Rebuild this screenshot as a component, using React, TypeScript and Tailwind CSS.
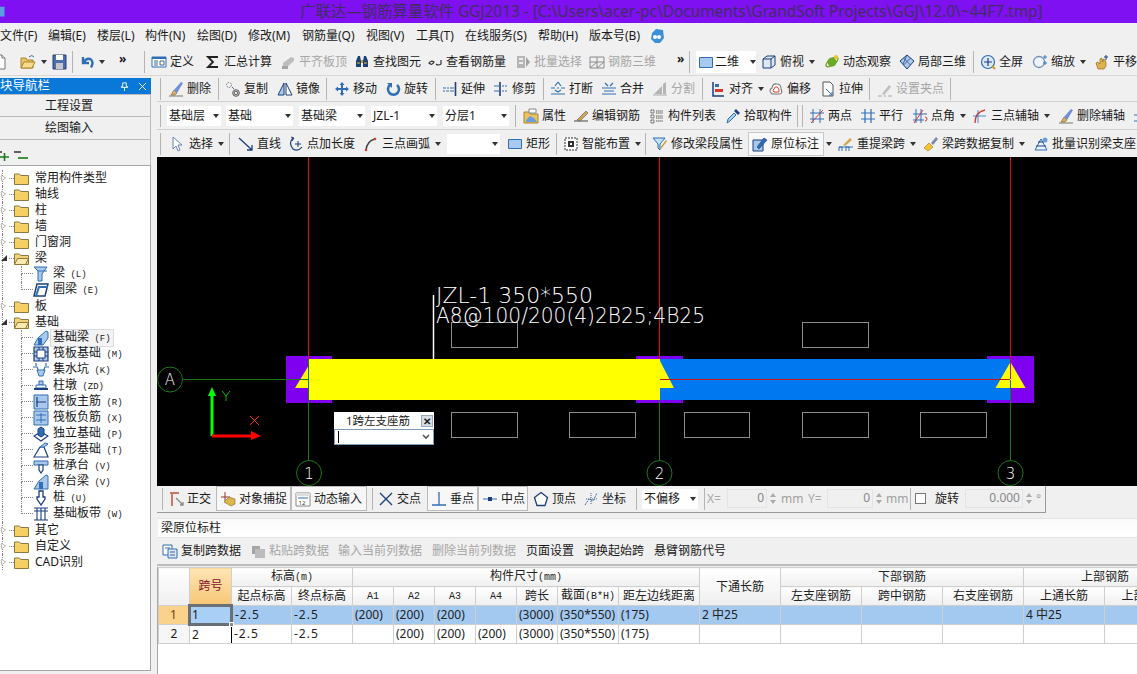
import React from 'react';

const B = '#2f6fb5', D = '#1d3f7a', L = '#a9c8ec', Y = '#f2c230', G = '#8a8a8a', R = '#d9382c';

const icons: Record<string, React.ReactNode> = {
  new: <><path d="M3 1h7l3 3v11H3z" fill="#fff" stroke="#777" /><path d="M10 1v3h3" fill="#eee" stroke="#777" /></>,
  open: <><path d="M1 4h5l1 2h6v8H1z" fill="#e8c468" stroke="#a8842c" /><path d="M1 14l3-6h11l-3 6z" fill="#f7dc8c" stroke="#a8842c" /><path d="M9 3q3-3 5 0" fill="none" stroke={B} /></>,
  save: <><path d="M1 1h13v14H1z" fill="#4a6fb0" stroke="#2a3f70" /><path d="M4 1h7v5H4z" fill="#fff" /><path d="M4 9h7v6H4z" fill="#c7c7c7" /></>,
  undo: <path d="M3 3v6h6M3.5 8.5Q7 3 11 5.5q3 3 0 8" fill="none" stroke={B} strokeWidth="2.4" />,
  def: <><path d="M1 3h14v10H1z" fill="#fff" stroke={B} /><path d="M1 3h14v2H1z" fill={B} /><path d="M3 7h4M3 9h4M3 11h4M9 7h4v4H9z" fill="none" stroke={D} strokeWidth=".8" /></>,
  sum: <path d="M13 3H3l5 5-5 5h10" fill="none" stroke="#222" strokeWidth="1.8" />,
  flat: <><path d="M3 9l8-6 3 1v3l-7 6H3z" fill="#bdbdbd" /><path d="M2 12h6v3H2z" fill="#a5a5a5" /></>,
  bino: <><path d="M2 7l2-5h2l1 5v6H2zM9 7l1-5h2l2 5v6H9z" fill="#1d3f7a" /><path d="M7 6h2v3H7z" fill="#c79a2a" /><path d="M3 9h3M10 9h3" stroke={Y} /></>,
  look: <><path d="M2 9q2-3 5-1-2 4-5 1zM14 6v4q-3 2-5 0" fill="none" stroke="#333" strokeWidth="1.2" /></>,
  batch: <><path d="M2 2h8v12H2z" fill="#b5b5b5" /><path d="M4 4h4v2H4zM4 8h4v2H4z" fill="#eee" /><path d="M11 3l4 5-4 5z" fill="#a0a0a0" /></>,
  steel3: <><path d="M1 3h14v11H1z" fill="none" stroke="#8a8a8a" /><path d="M1 8h14M8 3v11M1 14l7-6M8 14l7-6" stroke="#8a8a8a" /></>,
  two: <path d="M1.5 3.5h13v10h-13z" fill="#a8caf0" stroke={B} />,
  top: <><path d="M2 5l4-3h8v9l-4 3H2z" fill="#dbe8f6" stroke={D} /><path d="M2 5h8v9M10 5l4-3" fill="none" stroke={D} /></>,
  orbit: <><ellipse cx="8" cy="8" rx="7" ry="3" transform="rotate(-35 8 8)" fill="none" stroke="#7da52c" strokeWidth="1.4" /><circle cx="8" cy="8" r="4.5" fill="#6aa827" /><circle cx="12" cy="3" r="2" fill={Y} /></>,
  part: <><path d="M1 7l7-6 7 6-7 8z" fill={L} stroke={D} /><path d="M4.5 4l7 7M8 1l-4 9M11.5 4l-7 7" stroke={D} strokeWidth=".7" /></>,
  full: <><circle cx="8" cy="8" r="6.5" fill="#dbe8f6" stroke={B} strokeWidth="1.2" /><path d="M8 4v8M4 8h8" stroke={D} strokeWidth="1.2" /><path d="M12 12l3 3" stroke="#c79a2a" strokeWidth="2" /></>,
  zoom: <><circle cx="7" cy="8" r="5.5" fill="#eef4fb" stroke="#6f8fb5" strokeWidth="1.3" /><path d="M13 1v4M11 3h4M13 7v4M11 9h4" stroke="#3a7fbf" /></>,
  pan: <><path d="M4 15L2 9l2-1 2 2V5l1.5-1L9 8V5l2 1 1 3v3l-2 3z" fill="#e0b24c" stroke="#8a6a24" strokeWidth=".7" /><path d="M12 1v5M10 3h4" stroke={D} /></>,
  del: <><path d="M1 15h14" stroke="#777" /><path d="M3 14l3-5 3 3-2 2z" fill="#d8b060" stroke="#7d5a1f" strokeWidth=".6" /><path d="M6 9l7-8 2 1-6 10z" fill="#6f8fd8" /></>,
  copy: <><circle cx="4" cy="4" r="2.5" fill="none" stroke="#777" strokeDasharray="1.5 1" /><circle cx="11" cy="12" r="3.3" fill="none" stroke="#555" /><circle cx="11" cy="12" r="1.8" fill="none" stroke="#555" /><path d="M7 6l2 2" stroke={B} /></>,
  mirror: <><path d="M7 2L1 14h6z" fill={L} stroke={D} /><path d="M9 2l6 12H9z" fill="#fff" stroke={D} /></>,
  move: <path d="M8 1l2.500 3H9v3h3V5.500L15 8l-3 2.500V9H9v3h1.500L8 15l-2.500-3H7V9H4v1.500L1 8l3-2.500V7h3V4H5.500z" fill={B} />,
  rot: <><path d="M12 4a5.500 5.500 0 1 1-7 0" fill="none" stroke={B} strokeWidth="2.600" /><path d="M2 2h5v5z" fill={B} /></>,
  extend: <><path d="M13.500 1v14" stroke={D} strokeWidth="1.600" /><path d="M1 7h3M5 7h2M8 7h4M1 10h2M4 10h3M8 10h4" stroke={B} /></>,
  trim: <><path d="M7 1v14" stroke={D} strokeWidth="1.600" /><path d="M1 5h5M1 10h5M9 5h2M12 5h2M9 10h2M12 10h2" stroke={B} /></>,
  brk: <path d="M1 7h4M7 7h2M11 7h4M1 13h14M8 1l-3 4M8 1l3 4M8 11l-3-2M8 11l3-2" stroke={B} strokeWidth="1.200" fill="none" />,
  merge: <path d="M1 7h14M1 13h14M4 2l3 3M12 2L9 5M3 10h10" stroke={B} strokeWidth="1.200" fill="none" />,
  split: <><path d="M1 14h14" stroke="#aaa" /><path d="M2 13l8-8v8zM11 13V3l3-2v12z" fill="#b3b3b3" /></>,
  align: <><path d="M3 1v14h11" fill="none" stroke={D} strokeWidth="1.500" /><path d="M5 3h4v3H5z" fill={B} /><path d="M5 8h8v3H5z" fill={R} /></>,
  offset: <><path d="M4 13q-4-4 0-6 1-5 5-4 4 0 4 5 2 4-1 5z" fill="#fff" stroke="#777" strokeWidth="1.100" /><path d="M6 11q-2-2 0-3 1-3 3-2t2 3 0 2z" fill="none" stroke={R} /></>,
  stretch: <><path d="M3 1h7l3 3v11H3z" fill="#fff" stroke="#555" /><path d="M6 8l6 6M9 14h3v-3" fill="none" stroke={B} /></>,
  grip: <><path d="M1 15h4M7 15h2M11 15h4" stroke="#aaa" /><path d="M5 13l7-9 2 2-7 8z" fill="#bdbdbd" /></>,
  prop: <><path d="M1 4h5l1 2h8v9H1z" fill="#edc266" stroke="#a8842c" /><path d="M3 12l4-4 4 2 3 4H3z" fill="#6aa0d8" /><path d="M6 1h7v4H6z" fill="#fff" stroke="#888" /></>,
  edit: <><path d="M1 13h14" stroke="#444" /><path d="M4 12L13 3l2 2-8 8z" fill="#d0a850" stroke="#555" strokeWidth=".6" /></>,
  list: <path d="M2 2h3v3H2zM2 7h3v3H2zM2 12h3v3H2zM7 3h7M7 5h7M7 8h7M7 10h7M7 13h7" fill="none" stroke="#555" strokeDasharray="1.500 .6" />,
  pick: <><path d="M2 15l1-4 6-6 2 2-6 6z" fill="#a8d0f0" stroke={B} /><path d="M9 3l2-2 4 4-2 2z" fill={D} /></>,
  pt2: <><path d="M1 5h14M1 11h14M4 1v14M11 1v14" stroke={B} /><path d="M2 15L14 2" stroke={R} /></>,
  para: <path d="M1 5h14M1 11h14M5 1v14M11 1v14" stroke={B} strokeWidth="1.200" />,
  angle: <><path d="M1 6h14M1 12h11M4 1v14M9 1v14" stroke={B} /><path d="M2 15L11 2" stroke={R} /><path d="M13 9a2 2 0 1 1 0 4" fill="none" stroke={R} /></>,
  arc3: <><path d="M3 15Q3 4 13 2" fill="none" stroke={R} strokeWidth="1.300" /><path d="M1 8h13M6 2v13" stroke={B} strokeWidth=".8" /></>,
  sel: <path d="M3 1v12l3-3 2 5 2-1-2-5h4z" fill="#fff" stroke="#6b84b8" />,
  line: <path d="M1 2l13 12M14 9v5H9" fill="none" stroke={D} strokeWidth="1.300" />,
  len: <><path d="M5 2q-5 5 0 11 5 3 9-2" fill="none" stroke={D} strokeWidth="1.200" /><path d="M3 1l3 1-2 3M7 8h6M10 5v6" fill="none" stroke={D} /></>,
  arc: <><path d="M3 14Q4 5 12 3" fill="none" stroke="#444" strokeWidth="1.500" /><circle cx="3" cy="14" r="1.300" fill={R} /><circle cx="12" cy="3" r="1.300" fill={R} /></>,
  rect: <path d="M1.500 3.500h13v9h-13z" fill="#a8caf0" stroke={B} />,
  smart: <><path d="M2 2h12v12H2z" fill="#fff" stroke="#333" strokeDasharray="2 1" /><path d="M5 5h6v6H5z" fill="#333" /><path d="M7 7h2v2H7z" fill="#fff" /></>,
  attr: <><path d="M1 2h12L8 8v6l-2-2V8z" fill="#bfe2f5" stroke={B} /><path d="M8 12l6-8 1 1-6 8z" fill="#c79a2a" /></>,
  mark: <><path d="M1 4h10v11H1z" fill={L} stroke={D} /><path d="M5 11l7-9 3 2-8 9z" fill={B} stroke={D} strokeWidth=".6" /></>,
  respan: <><path d="M1 15v-4h3v4M8 15v-4h3v4M1 11h14" fill="none" stroke={B} /><path d="M5 9l7-7 2 2-7 6z" fill="#d0a850" /></>,
  brush: <><path d="M1 12l5-5 4 4-5 4z" fill={Y} stroke="#9a7a1a" strokeWidth=".6" /><path d="M8 7l5-6 2 2-5 6z" fill="#7a8aa8" /></>,
  batchid: <><path d="M2 14L8 3l6 11z" fill="#eaf3fb" stroke={B} /><path d="M5 6h6M3 10h10" stroke={D} /><circle cx="12" cy="4" r="2.500" fill="#6aa0d8" /></>,
  ortho: <><path d="M2 2h9M4 2v13" stroke="#c87868" strokeWidth="2" /><path d="M8 7l7 7M12 14h3v-3" fill="none" stroke="#888" strokeWidth="1.300" /></>,
  snap: <><path d="M1 6h9M5 1v9" stroke="#933" /><path d="M4 11l5-5 6 2v5l-4 2z" fill="#dcb64c" stroke="#8a6a24" strokeWidth=".6" /></>,
  dyn: <><path d="M1 2h14v13H1z" fill="#fff" stroke="#888" /><path d="M1 2h14v3H1z" fill="#ddd" /><path d="M3 7h10" stroke={B} /><text x="3.500" y="14" fontSize="6" fill="#333">12</text></>,
  cross: <path d="M2 2l12 12M14 2L2 14" stroke={D} strokeWidth="1.400" />,
  perp: <path d="M1 14h14M8 1v13" stroke={B} strokeWidth="1.300" />,
  mid: <><path d="M1 8h14" stroke={B} /><path d="M6 6h4v4H6z" fill={D} /></>,
  vertex: <><path d="M8 1.500l6.500 5-2.500 8H4l-2.500-8z" fill="#fff" stroke={D} strokeWidth="1.300" /></>,
  coord: <><path d="M2 14l4-6 4 2 4-8" fill="none" stroke={B} strokeDasharray="2 1" /><path d="M8 2v12M3 8h11" stroke={D} strokeWidth=".8" strokeDasharray="1 1" /></>,
  paste: <><path d="M2 3h8v8H2z" fill="#a5a5a5" /><path d="M5 6h10v9H5z" fill="#bcbcbc" /></>,
  copydata: <><path d="M1 2h9v10H1z" fill="#fff" stroke={B} /><path d="M6 6h9v9H6z" fill="#dbe8f6" stroke={B} /><path d="M3 5h5M8 9h5M8 12h5" stroke={D} strokeWidth=".8" /></>,
  beam: <><path d="M1 1h13L9 8v7H5V5z" fill={L} stroke={B} /><path d="M5 5h9" stroke={B} /></>,
  ring: <><path d="M4 2h11l-3 12H1z" fill="#fff" stroke={D} strokeWidth="1.500" /><path d="M3 14l3-9h9" fill="none" stroke={B} strokeWidth="2" /></>,
  fbeam: <><path d="M5 8l8-7 2 1v6l-5 7H1z" fill={L} stroke={B} /><path d="M5 15V8h4v7z" fill={B} /></>,
  raft: <><path d="M1 1h14v14H1z" fill={L} stroke={D} strokeWidth="1.200" /><path d="M4 4h8v8H4zM1 6h3M1 10h3M12 6h3M12 10h3M6 1v3M10 1v3M6 12v3M10 12v3" fill="#fff" stroke={D} /></>,
  pit: <><path d="M0 5h4l2 5h4l2-5h4M3 1v3M13 1v3" fill="none" stroke={B} strokeWidth="1.200" /><path d="M4 8h8l-2 6H6z" fill={L} stroke={B} /></>,
  pier: <><path d="M6 3h4v4H6z" fill={L} stroke={B} /><path d="M3 7h10v3H3z" fill="#fff" stroke={B} /><path d="M1 11h14" stroke={D} strokeWidth="2" /></>,
  rmain: <><path d="M1 1h14v14H1z" fill={L} stroke={B} /><path d="M4 3v10M3 8h10" stroke={D} strokeWidth="1.200" /></>,
  rneg: <><path d="M1 1h14v14H1z" fill={L} stroke={B} /><path d="M3 5h10M3 10h10M8 3v10" stroke={B} /></>,
  iso: <><path d="M1 10l7-4 7 4-7 5z" fill="#fff" stroke={D} strokeWidth="1.200" /><path d="M5 3l3-2 3 2v6l-3 2-3-2z" fill={B} stroke={D} /></>,
  strip: <><path d="M1 15l6-10h4l4 10z" fill="#fff" stroke={D} strokeWidth="1.200" /><path d="M7 5l5-4 3 1-4 3z" fill={L} stroke={B} /></>,
  cap: <><path d="M1 3h14v4H1z" fill={L} stroke={B} /><path d="M6 7h4v5l-2 3-2-3z" fill="#fff" stroke={D} strokeWidth="1.200" /></>,
  capbeam: <><path d="M1 15l5-8 7-6 2 1v13z" fill={L} stroke={B} /><path d="M6 15V8h4v7z" fill={B} /></>,
  pile: <><path d="M6 1h4v6h2v2l-4 6-4-6V7h2z" fill="#fff" stroke={D} strokeWidth="1.300" /></>,
  band: <path d="M1 2h14M1 14h14M4 2v12M8 2v12M12 2v12M1 5h14" stroke={D} strokeWidth="1.100" />,
  app: <><path d="M3 5l4-4 7 1 1 8-4 5H6L2 11z" fill="#3d8fd8" /><circle cx="6" cy="9" r="2" fill="#fff" /><circle cx="10" cy="9" r="2" fill="#fff" /></>,
};

const Icon = ({ n, cls = '' }: { n: string; cls?: string }) => (
  <svg viewBox="0 0 16 16" className={`w-4 h-4 shrink-0 ${cls}`}>{icons[n]}</svg>
);

const Dd = ({ cls = 'ml-[5px]' }: { cls?: string }) => (
  <svg viewBox="0 0 6 4" className={`w-[6px] h-[4px] shrink-0 ${cls}`}><path d="M0 0h6L3 4z" fill="#333" /></svg>
);

const Sep = ({ cls = '' }: { cls?: string }) => (
  <div className={`w-[2px] h-[22px] shrink-0 border-l border-[#b4b4b4] border-r-white ${cls}`} />
);

const Item = ({ i, t, cls = '', dim, dd, sub }: { i: string; t: string; cls?: string; dim?: boolean; dd?: boolean; sub?: string }) => (
  <div className={`flex items-center shrink-0 h-full ${cls}`}>
    <Icon n={i} />
    <span className={`ml-[3px] whitespace-nowrap ${dim ? 'text-[#a6a6a6]' : ''}`}>{t}{sub}</span>
    {dd && <Dd />}
  </div>
);

const Combo = ({ t, cls }: { t: string; cls: string }) => (
  <div className={`flex items-center justify-between h-[20px] bg-white pl-[2px] pr-[2px] shrink-0 ${cls}`}>
    <span className="whitespace-nowrap">{t}</span>
    <Dd cls="" />
  </div>
);

const Spin = () => (
  <div className="flex flex-col gap-[3px] w-[8px] ml-[3px] shrink-0">
    <svg viewBox="0 0 6 4" className="w-[6px] h-[4px]"><path d="M3 0l3 4H0z" fill="#aaa" /></svg>
    <svg viewBox="0 0 6 4" className="w-[6px] h-[4px]"><path d="M0 0h6L3 4z" fill="#aaa" /></svg>
  </div>
);

const Folder = ({ open }: { open?: boolean }) => (
  <svg viewBox="0 0 15 13" className="w-[15px] h-[13px] shrink-0">
    <path d="M.5 2h5l1 1.500h8v9H.5z" fill="#f3d27a" stroke="#8f7a3c" />
    {open
      ? <path d="M.5 12.500l3-6h11l-3 6z" fill="#fbeaae" stroke="#8f7a3c" />
      : <path d="M1 5h13v7H1z" fill="#f5cf62" />}
  </svg>
);

const Top = ({ t, open, trunk = true }: { t: string; open?: boolean; trunk?: boolean }) => (
  <div className="flex items-center h-[16px]">
    <div className={`w-[7px] h-full flex items-center shrink-0 ${trunk ? 'border-l border-dotted border-[#888]' : ''} -ml-[1px]`}>
      {open
        ? <svg viewBox="0 0 6 6" className="w-[6px] h-[6px] -ml-[2px]"><path d="M6 0v6H0z" fill="#333" /></svg>
        : <svg viewBox="0 0 6 8" className="w-[5px] h-[8px] -ml-[2px]"><path d="M.5.500l5 3.500-5 3.500z" fill="#fff" stroke="#aaa" /></svg>}
    </div>
    <div className="w-[5px] border-t border-dotted border-[#888] shrink-0" />
    <Folder open={open} />
    <span className="ml-[6px] whitespace-nowrap">{t}</span>
  </div>
);

const Sub = ({ i, t, code, sel, last }: { i: string; t: string; code: string; sel?: boolean; last?: boolean }) => (
  <div className="flex items-center h-[16px]">
    <div className="w-[19px] h-full border-l border-dotted border-[#888] shrink-0 -ml-[1px]" />
    <div className="w-[12px] h-full shrink-0 flex flex-col">
      <div className="h-[8px] border-l border-b border-dotted border-[#888]" />
      {!last && <div className="h-[8px] border-l border-dotted border-[#888]" />}
    </div>
    <Icon n={i} />
    <span className={`ml-[2px] pl-[2px] pr-[2px] whitespace-nowrap leading-[14px] ${sel ? 'bg-[#f3f3f3] outline outline-[#dcdcdc]' : ''}`}>
      {t}<span className="[font-family:'Liberation_Mono',monospace] text-[9px]"> {code}</span>
    </span>
  </div>
);

const Th = ({ children, cls = '', ...p }: any) => (
  <th {...p} className={`border border-[#cfcfcf] p-0 font-normal text-center overflow-hidden whitespace-nowrap bg-gradient-to-b from-white to-[#efefef] text-[#222] ${cls}`}>{children}</th>
);
const Mono = ({ t }: { t: string }) => <span className="[font-family:'Liberation_Mono',monospace] text-[10px]">{t}</span>;
const Td = ({ children, cls = '' }: any) => (
  <td className={`border border-[#cfcfcf] p-0 pl-[2px] overflow-hidden whitespace-nowrap text-[#222] ${cls}`}>{children}</td>
);

const row1 = ['(200)', '(200)', '(200)', '', '(3000)', '(350*550)', '(175)'];
const row2 = ['', '(200)', '(200)', '(200)', '(3000)', '(350*550)', '(175)'];

export default function App() {
  return (
    <div className="w-[1137px] h-[674px] overflow-hidden bg-[#f0f0f0] text-[12px] leading-[16px] text-[#1a1a1a] [font-family:'Noto_Sans','Noto_Sans_CJK_SC',sans-serif]">
      {/* title */}
      <div className="h-[23px] bg-[#7f10f2] flex items-center">
        <svg viewBox="0 0 8 16" className="w-[6px] h-[14px] shrink-0"><path d="M0 1h6v13H0z" fill="#5aa0e0" /></svg>
        <span className="ml-[294px] text-[15.400px] whitespace-nowrap text-[#3f2d60]">广联达—钢筋算量软件 GGJ2013 - [C:\Users\acer-pc\Documents\GrandSoft Projects\GGJ\12.0\~44F7.tmp]</span>
      </div>
      {/* menu */}
      <div className="h-[24px] pt-[1px] flex items-center whitespace-nowrap">
        <span className="w-[48px] shrink-0">文件(F)</span>
        <span className="w-[49px] shrink-0">编辑(E)</span>
        <span className="w-[48px] shrink-0">楼层(L)</span>
        <span className="w-[52px] shrink-0">构件(N)</span>
        <span className="w-[51px] shrink-0">绘图(D)</span>
        <span className="w-[54px] shrink-0">修改(M)</span>
        <span className="w-[64px] shrink-0">钢筋量(Q)</span>
        <span className="w-[50px] shrink-0">视图(V)</span>
        <span className="w-[49px] shrink-0">工具(T)</span>
        <span className="w-[73px] shrink-0">在线服务(S)</span>
        <span className="w-[51px] shrink-0">帮助(H)</span>
        <span className="w-[60px] shrink-0">版本号(B)</span>
        <Icon n="app" />
      </div>
      {/* toolbar 1 */}
      <div className="h-[29px] pt-[1px] flex items-center border-b border-[#d8d8d8] whitespace-nowrap">
        <div className="w-[138px] shrink-0 flex items-center">
          <Icon n="new" cls="-ml-[8px]" />
          <Icon n="open" cls="ml-[12px]" />
          <Dd />
          <Icon n="save" cls="ml-[5px]" />
          <Sep cls="ml-[4px]" />
          <Icon n="undo" cls="ml-[6px]" />
          <Dd cls="ml-[3px]" />
          <span className="ml-[14px] font-bold -mt-[6px]">»</span>
        </div>
        <Sep cls="ml-[6px]" />
        <Item i="def" t="定义" cls="ml-[5px] w-[54px]" />
        <Item i="sum" t="汇总计算" cls="w-[75px]" />
        <Item i="flat" t="平齐板顶" dim cls="w-[74px]" />
        <Item i="bino" t="查找图元" cls="w-[73px]" />
        <Item i="look" t="查看钢筋量" cls="w-[88px]" />
        <Item i="batch" t="批量选择" dim cls="w-[74px]" />
        <Item i="steel3" t="钢筋三维" dim cls="w-[80px]" />
        <span className="ml-[8px] w-[16px] font-bold -mt-[6px]">»</span>
        <Sep />
        <div className="ml-[5px] w-[60px] h-[22px] bg-white flex items-center shrink-0">
          <Icon n="two" cls="ml-[2px]" />
          <span className="ml-[1px]">二维</span>
          <Dd cls="ml-[11px]" />
        </div>
        <Item i="top" t="俯视" dd cls="ml-[5px] w-[63px]" />
        <Item i="orbit" t="动态观察" cls="w-[75px]" />
        <Item i="part" t="局部三维" cls="w-[74px]" />
        <Sep />
        <Item i="full" t="全屏" cls="ml-[5px] w-[52px]" />
        <Item i="zoom" t="缩放" dd cls="w-[62px]" />
        <Item i="pan" t="平移" />
      </div>

      <div className="flex h-[598px]">
        {/* sidebar */}
        <div className="w-[157px] shrink-0 pr-[6px] pt-[2px] pb-[3px] flex flex-col">
          <div className="h-[16px] bg-[#0a78d8] text-white flex items-center justify-between pr-[4px] shrink-0">
            <span className="text-[12.500px] whitespace-nowrap">块导航栏</span>
            <div className="flex items-center gap-[9px]">
              <svg viewBox="0 0 10 10" className="w-[9px] h-[9px]"><path d="M3 1h4v4h1.500v1h-7V5H3zM5 6v4" fill="none" stroke="#fff" /></svg>
              <svg viewBox="0 0 10 10" className="w-[9px] h-[9px]"><path d="M1 1l8 8M9 1L1 9" stroke="#fff" /></svg>
            </div>
          </div>
          <div className="h-[23px] border-y border-r border-[#bbb] pr-[12px] flex items-center justify-center shrink-0">工程设置</div>
          <div className="h-[23px] border-b border-r border-[#bbb] pr-[12px] flex items-center justify-center shrink-0">绘图输入</div>
          <div className="h-[25px] flex items-center pt-[6px] border-r border-[#bbb] shrink-0">
            <svg viewBox="0 0 12 10" className="w-[12px] h-[10px] -ml-[3px]"><path d="M0 1h5" stroke="#333" strokeWidth="1.500" /><path d="M3 6h9M7.500 2v8" stroke="#1b7a1b" strokeWidth="1.600" /></svg>
            <svg viewBox="0 0 14 10" className="w-[14px] h-[10px] ml-[5px]"><path d="M0 1h7" stroke="#333" strokeWidth="1.500" /><path d="M4 7h10" stroke="#1b7a1b" strokeWidth="1.600" /></svg>
          </div>
          <div className="flex-1 bg-white border border-l-0 border-[#a8a8a8] pl-[3px] pt-[4px] overflow-hidden">
            <Top t="常用构件类型" />
            <Top t="轴线" />
            <Top t="柱" />
            <Top t="墙" />
            <Top t="门窗洞" />
            <Top t="梁" open />
            <Sub i="beam" t="梁" code="(L)" />
            <Sub i="ring" t="圈梁" code="(E)" last />
            <Top t="板" />
            <Top t="基础" open />
            <Sub i="fbeam" t="基础梁" code="(F)" sel />
            <Sub i="raft" t="筏板基础" code="(M)" />
            <Sub i="pit" t="集水坑" code="(K)" />
            <Sub i="pier" t="柱墩" code="(ZD)" />
            <Sub i="rmain" t="筏板主筋" code="(R)" />
            <Sub i="rneg" t="筏板负筋" code="(X)" />
            <Sub i="iso" t="独立基础" code="(P)" />
            <Sub i="strip" t="条形基础" code="(T)" />
            <Sub i="cap" t="桩承台" code="(V)" />
            <Sub i="capbeam" t="承台梁" code="(V)" />
            <Sub i="pile" t="桩" code="(U)" />
            <Sub i="band" t="基础板带" code="(W)" last />
            <Top t="其它" />
            <Top t="自定义" />
            <Top t="CAD识别" />
          </div>
        </div>

        {/* main */}
        <div className="w-[980px] shrink-0 flex flex-col">
          <div className="h-[26px] flex items-center border-b border-[#d0d0d0] whitespace-nowrap shrink-0">
            <Sep cls="ml-[3px]" />
            <Item i="del" t="删除" cls="ml-[6px] w-[50px]" />
            <Sep />
            <Item i="copy" t="复制" cls="ml-[5px] w-[52px]" />
            <Item i="mirror" t="镜像" cls="w-[49px]" />
            <Sep />
            <Item i="move" t="移动" cls="ml-[6px] w-[51px]" />
            <Item i="rot" t="旋转" cls="w-[50px]" />
            <Sep />
            <Item i="extend" t="延伸" cls="ml-[5px] w-[51px]" />
            <Item i="trim" t="修剪" cls="w-[50px]" />
            <Sep />
            <Item i="brk" t="打断" cls="ml-[5px] w-[51px]" />
            <Item i="merge" t="合并" cls="w-[51px]" />
            <Item i="split" t="分割" dim cls="w-[50px]" />
            <Sep />
            <Item i="align" t="对齐" dd cls="ml-[6px] w-[58px]" />
            <Item i="offset" t="偏移" cls="w-[52px]" />
            <Item i="stretch" t="拉伸" cls="w-[49px]" />
            <Sep />
            <Item i="grip" t="设置夹点" dim cls="ml-[6px] w-[73px]" />
            <Sep />
          </div>
          <div className="h-[28px] flex items-center border-b border-[#d0d0d0] whitespace-nowrap shrink-0">
            <Sep cls="ml-[3px]" />
            <Combo t="基础层" cls="ml-[5px] w-[54px]" />
            <Combo t="基础" cls="ml-[5px] w-[67px]" />
            <Combo t="基础梁" cls="ml-[6px] w-[66px]" />
            <Combo t="JZL-1" cls="ml-[6px] w-[66px]" />
            <Combo t="分层1" cls="ml-[6px] w-[66px]" />
            <Sep cls="ml-[6px]" />
            <Item i="prop" t="属性" cls="ml-[6px] w-[50px]" />
            <Item i="edit" t="编辑钢筋" cls="w-[76px]" />
            <Item i="list" t="构件列表" cls="w-[76px]" />
            <Item i="pick" t="拾取构件" cls="w-[72px]" />
            <Sep />
            <Sep cls="ml-[3px]" />
            <Item i="pt2" t="两点" cls="ml-[5px] w-[51px]" />
            <Item i="para" t="平行" cls="w-[52px]" />
            <Item i="angle" t="点角" dd cls="w-[60px]" />
            <Item i="arc3" t="三点辅轴" dd cls="w-[86px]" />
            <Item i="del" t="删除辅轴" cls="w-[75px]" />
            <Icon n="brk" />
          </div>
          <div className="h-[27px] flex items-center whitespace-nowrap shrink-0">
            <Sep cls="ml-[3px]" />
            <Item i="sel" t="选择" dd cls="ml-[8px] w-[59px]" />
            <Sep />
            <Item i="line" t="直线" cls="ml-[7px] w-[50px]" />
            <Item i="len" t="点加长度" cls="w-[75px]" />
            <Item i="arc" t="三点画弧" dd cls="w-[84px]" />
            <Combo t="" cls="w-[53px]" />
            <Item i="rect" t="矩形" cls="ml-[7px] w-[49px]" />
            <Sep />
            <Item i="smart" t="智能布置" dd cls="ml-[5px] w-[82px]" />
            <Sep />
            <Item i="attr" t="修改梁段属性" cls="ml-[5px] w-[96px]" />
            <div className="w-[90px] h-full flex items-center shrink-0">
              <div className="w-[76px] h-[24px] bg-[#f9f9f9] border border-[#c8c8c8] flex items-center shrink-0 pl-[3px]">
                <Icon n="mark" />
                <span className="ml-[3px]">原位标注</span>
              </div>
              <Dd cls="ml-[2px]" />
            </div>
            <Item i="respan" t="重提梁跨" dd cls="w-[85px]" />
            <Item i="brush" t="梁跨数据复制" dd cls="w-[110px]" />
            <Item i="batchid" t="批量识别梁支座" />
          </div>

          {/* canvas */}
          <div className="relative h-[329px] bg-black shrink-0 overflow-hidden">
            <svg viewBox="157 157 980 329" className="w-[980px] h-[329px] block">
              <g fill="none" stroke="#8c8c8c">
                <rect x="451.500" y="322.500" width="66" height="25" />
                <rect x="802.500" y="322.500" width="66" height="25" />
                <rect x="451.500" y="412.500" width="66" height="25" />
                <rect x="569.500" y="412.500" width="66" height="25" />
                <rect x="684.500" y="412.500" width="65" height="25" />
                <rect x="802.500" y="412.500" width="66" height="25" />
                <rect x="920.500" y="412.500" width="66" height="25" />
              </g>
              <path d="M286 356h46v47h-46zM636 356h47v47h-47zM987 356h47v47h-47z" fill="#7f00f0" />
              <path d="M660 359h351v41H660z" fill="#0078f0" />
              <path d="M1011 356h23v47h-23z" fill="#7f00f0" />
              <path d="M309 365L295 388h14z" fill="#ffff00" />
              <path d="M1010.500 362l15 26h-30z" fill="#ffff00" />
              <path d="M309 359h351v41H309z" fill="#ffff00" />
              <path d="M659.500 360l14.500 28h-14.500z" fill="#ffff00" />
              <path d="M308.500 157v202" stroke="#e01010" fill="none" />
              <path d="M659.500 157v202" stroke="#e01010" fill="none" />
              <path d="M1010.500 157v222" stroke="#e01010" fill="none" />
              <path d="M660 379.500h350" stroke="#c01818" />
              <path d="M183 379.500h126M308.500 359v101M659.500 400v60M1010.500 380v80" stroke="#1a7a1a" fill="none" />
              <circle cx="170" cy="379.500" r="12.500" fill="none" stroke="#1a7a1a" />
              <circle cx="309" cy="473" r="12.500" fill="none" stroke="#1a7a1a" />
              <circle cx="659.500" cy="473" r="12.500" fill="none" stroke="#1a7a1a" />
              <circle cx="1010.500" cy="473" r="12.500" fill="none" stroke="#1a7a1a" />
              <g fill="#fff" fontFamily="'DejaVu Sans', sans-serif" fontWeight="200" fontSize="15" textAnchor="middle">
                <text x="170" y="385">A</text>
                <text x="309" y="479">1</text>
                <text x="659.500" y="479">2</text>
                <text x="1010.500" y="479">3</text>
              </g>
              <path d="M433.500 295v64" stroke="#fff" strokeWidth="1.500" />
              <g fill="#fff" fontFamily="'DejaVu Sans', sans-serif" fontWeight="200" fontSize="21">
                <text x="436" y="303" textLength="157" lengthAdjust="spacingAndGlyphs">JZL-1 350*550</text>
                <text x="436" y="323" textLength="269" lengthAdjust="spacingAndGlyphs">A8@100/200(4)2B25;4B25</text>
              </g>
              <path d="M212 394v42" stroke="#00ff00" strokeWidth="3" />
              <path d="M212 387l4 9h-8z" fill="#00ff00" />
              <path d="M212 436h41" stroke="#ff0000" strokeWidth="3" />
              <path d="M261 436l-10 4v-9z" fill="#ff0000" />
              <path d="M222 391l4 5 4-5M226 396v5" fill="none" stroke="#00c000" />
              <path d="M250 416l9 9M259 416l-9 9" stroke="#ff2020" />
            </svg>
            {/* input popup */}
            <div className="absolute left-[177px] top-[255px] w-[100px] h-[33px] bg-white flex flex-col">
              <div className="h-[17px] flex items-center text-[11.500px] pl-[12px] justify-between pr-[1px]">
                <span className="whitespace-nowrap">1跨左支座筋</span>
                <div className="w-[12px] h-[12px] bg-[#d6dfe8] border border-[#9aa8b8] flex items-center justify-center text-[10px] font-bold leading-none">✕</div>
              </div>
              <div className="flex-1 flex items-center justify-between border border-[#7f9db9] pl-[3px] pr-[3px]">
                <div className="w-px h-[12px] bg-black" />
                <svg viewBox="0 0 8 6" className="w-[8px] h-[6px]"><path d="M1 1l3 3 3-3" fill="none" stroke="#555" strokeWidth="1.600" /></svg>
              </div>
            </div>
          </div>

          {/* status */}
          <div className="h-[27px] w-[889px] pb-[1px] flex items-center whitespace-nowrap border-b border-r border-[#9a9a9a] shrink-0">
            <Sep cls="ml-[5px]" />
            <Item i="ortho" t="正交" cls="ml-[4px] w-[48px]" />
            <Item i="snap" t="对象捕捉" cls="w-[75px] h-[22px] border border-[#bbb] bg-[#f7f7f7] pl-[3px]" />
            <Item i="dyn" t="动态输入" cls="w-[76px] h-[22px] border border-[#bbb] bg-[#f7f7f7] pl-[3px]" />
            <Sep cls="ml-[5px]" />
            <Item i="cross" t="交点" cls="ml-[4px] w-[49px]" />
            <Item i="perp" t="垂点" cls="w-[51px] h-[22px] border border-[#bbb] bg-[#f7f7f7] pl-[3px]" />
            <Item i="mid" t="中点" cls="w-[50px] h-[22px] border border-[#bbb] bg-[#f7f7f7] pl-[3px]" />
            <Item i="vertex" t="顶点" cls="ml-[5px] w-[50px]" />
            <Item i="coord" t="坐标" cls="w-[53px]" />
            <Sep />
            <Combo t="不偏移" cls="ml-[4px] w-[56px]" />
            <Sep cls="ml-[6px]" />
            <span className="ml-[1px] w-[20px] text-[#a8a8a8] shrink-0">X=</span>
            <div className="w-[40px] h-[19px] border border-[#e4e4e4] text-right pr-[2px] text-[#888] shrink-0">0</div>
            <Spin />
            <span className="ml-[3px] w-[27px] text-[#a0a0a0] shrink-0">mm</span>
            <span className="w-[19px] text-[#a8a8a8] shrink-0">Y=</span>
            <div className="w-[46px] h-[19px] border border-[#e4e4e4] text-right pr-[2px] text-[#888] shrink-0">0</div>
            <Spin />
            <span className="ml-[2px] w-[24px] text-[#a0a0a0] shrink-0">mm</span>
            <Sep />
            <div className="ml-[3px] w-[11px] h-[11px] border border-[#777] bg-white shrink-0" />
            <span className="ml-[9px] w-[30px] shrink-0">旋转</span>
            <div className="w-[58px] h-[19px] border border-[#e4e4e4] text-right pr-[2px] text-[#888] shrink-0">0.000</div>
            <Spin />
            <span className="ml-[2px] w-[8px] text-[#a0a0a0] shrink-0">°</span>
          </div>

          <div className="h-[5px] shrink-0" />
          <div className="h-[20px] ml-[1px] flex items-center pl-[3px] bg-gradient-to-b from-[#fafafa] to-white border-y border-[#e4e4e4] shrink-0">梁原位标柱</div>
          <div className="h-[28px] flex items-center whitespace-nowrap border-b-[2px] border-[#bdbdbd] shrink-0">
            <Item i="copydata" t="复制跨数据" cls="ml-[5px] w-[88px]" />
            <Item i="paste" t="粘贴跨数据" dim cls="w-[88px]" />
            <span className="w-[94px] shrink-0 text-[#a6a6a6]">输入当前列数据</span>
            <span className="w-[94px] shrink-0 text-[#a6a6a6]">删除当前列数据</span>
            <span className="w-[58px] shrink-0">页面设置</span>
            <span className="w-[70px] shrink-0">调换起始跨</span>
            <span className="shrink-0">悬臂钢筋代号</span>
          </div>

          {/* table */}
          <div className="flex-1 mt-[1px] bg-white border-l border-[#a8a8a8] overflow-hidden">
            <table className="table-fixed border-collapse w-[1028px] text-[12px] leading-[14px]">
              <colgroup>
                <col className="w-[31px]" /><col className="w-[42px]" /><col className="w-[60px]" /><col className="w-[61px]" />
                <col className="w-[41px]" /><col className="w-[41px]" /><col className="w-[41px]" /><col className="w-[41px]" />
                <col className="w-[41px]" /><col className="w-[61px]" /><col className="w-[81px]" /><col className="w-[81px]" />
                <col className="w-[81px]" /><col className="w-[81px]" /><col className="w-[81px]" /><col className="w-[81px]" /><col className="w-[82px]" />
              </colgroup>
              <thead>
                <tr className="h-[19px]">
                  <Th rowSpan={2} />
                  <Th rowSpan={2} cls="!from-[#fde6b4] !to-[#f7c676] !text-[#8a1030]">跨号</Th>
                  <Th colSpan={2}>标高<Mono t="(m)" /></Th>
                  <Th colSpan={7}>构件尺寸<Mono t="(mm)" /></Th>
                  <Th rowSpan={2}>下通长筋</Th>
                  <Th colSpan={3}>下部钢筋</Th>
                  <Th colSpan={2}>上部钢筋</Th>
                </tr>
                <tr className="h-[19px]">
                  <Th>起点标高</Th><Th>终点标高</Th>
                  <Th><Mono t="A1" /></Th><Th><Mono t="A2" /></Th><Th><Mono t="A3" /></Th><Th><Mono t="A4" /></Th>
                  <Th>跨长</Th><Th>截面<Mono t="(B*H)" /></Th><Th>距左边线距离</Th>
                  <Th>左支座钢筋</Th><Th>跨中钢筋</Th><Th>右支座钢筋</Th>
                  <Th>上通长筋</Th><Th>上部钢筋</Th>
                </tr>
              </thead>
              <tbody>
                <tr className="h-[19px] bg-[#a3c9f1]">
                  <td className="border border-[#cfcfcf] p-0 text-center bg-[#fbd28c] text-[#7a3a10]">1</td>
                  <td className="relative border-[3px] border-[#6a6f76] p-0 pl-[1px] bg-[#a9cff7]">
                    1
                    <div className="absolute -right-[4px] -bottom-[4px] w-[5px] h-[5px] bg-[#888] border border-white" />
                  </td>
                  <Td><span className="tracking-[1px]">-2.5</span></Td>
                  <Td><span className="tracking-[1px]">-2.5</span></Td>
                  {row1.map((v, k) => <Td key={k}>{v}</Td>)}
                  <Td>2 中25</Td><Td /><Td /><Td /><Td>4 中25</Td><Td />
                </tr>
                <tr className="h-[19px]">
                  <td className="border border-[#cfcfcf] p-0 text-center bg-[#f6f6f6]">2</td>
                  <Td cls="border-r-black">2</Td>
                  <Td><span className="tracking-[1px]">-2.5</span></Td>
                  <Td><span className="tracking-[1px]">-2.5</span></Td>
                  {row2.map((v, k) => <Td key={k}>{v}</Td>)}
                  <Td /><Td /><Td /><Td /><Td /><Td />
                </tr>
              </tbody>
            </table>
          </div>
        </div>
      </div>
    </div>
  );
}
